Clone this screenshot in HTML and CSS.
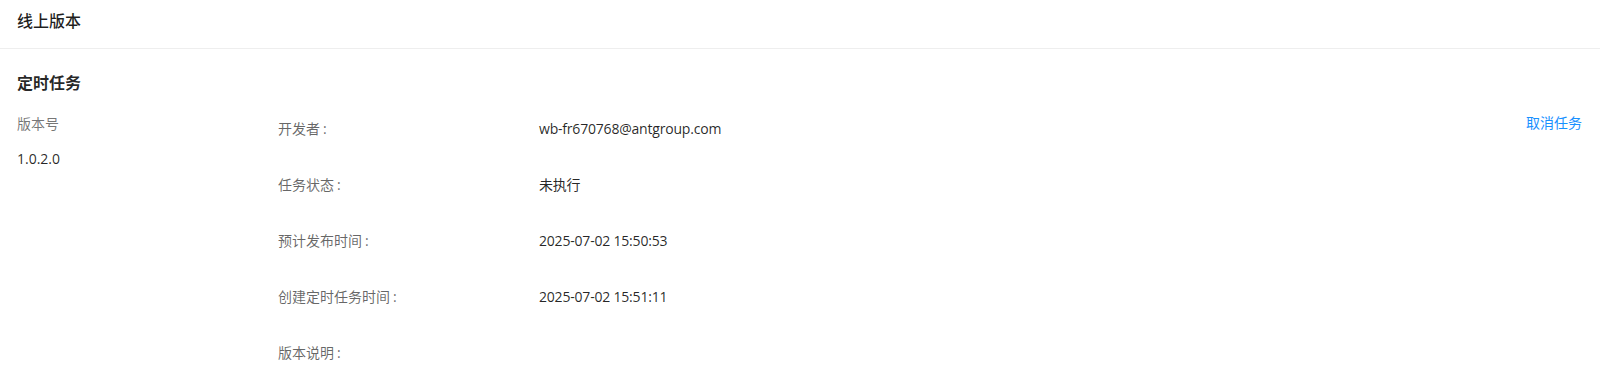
FILE: index.html
```html
<!DOCTYPE html>
<html lang="zh-CN">
<head>
<meta charset="utf-8">
<link rel="stylesheet" href="styles.css">
</head>
<body>
<div class="page">
  <div class="header"><span class="header-title">线上版本</span></div>
  <div class="section">
    <div class="section-title">定时任务</div>
    <div class="row">
      <div class="col-version">
        <div class="version-label">版本号</div>
        <div class="version-value">1.0.2.0</div>
      </div>
      <div class="desc">
        <div class="desc-label">开发者<span class="colon">:</span></div><div class="desc-value">wb-fr670768@antgroup.com</div>
        <div class="desc-label">任务状态<span class="colon">:</span></div><div class="desc-value">未执行</div>
        <div class="desc-label">预计发布时间<span class="colon">:</span></div><div class="desc-value">2025-07-02 15:50:53</div>
        <div class="desc-label">创建定时任务时间<span class="colon">:</span></div><div class="desc-value">2025-07-02 15:51:11</div>
        <div class="desc-label">版本说明<span class="colon">:</span></div><div class="desc-value"></div>
      </div>
      <div class="actions"><a class="action-link">取消任务</a></div>
    </div>
  </div>
</div>
</body>
</html>
```
FILE: styles.css
```css
* { box-sizing: border-box; }
html, body { margin: 0; padding: 0; background: #fff; }
body {
  font-family: "Open Sans", "Noto Sans CJK SC", sans-serif;
  font-size: 14px;
  color: rgba(0, 0, 0, 0.85);
  width: 1600px;
  height: 381px;
  overflow: hidden;
}
.header {
  height: 49px;
  border-bottom: 1px solid #eeeeee;
  padding: 0 17px;
  display: flex;
  align-items: center;
}
.header-title {
  font-size: 16px;
  font-weight: 500;
  line-height: 24px;
  color: rgba(0, 0, 0, 0.88);
  margin-top: -6px;
}
.section {
  padding: 22px 18px 0 17px;
}
.section-title {
  font-size: 16px;
  font-weight: 600;
  line-height: 24px;
  color: rgba(0, 0, 0, 0.85);
}
.row {
  display: flex;
  margin-top: 17px;
}
.col-version {
  width: 261px;
  flex: none;
  line-height: 22px;
}
.version-label { color: rgba(0, 0, 0, 0.55); margin-bottom: 13px; margin-top: 1px; }
.version-value { color: rgba(0, 0, 0, 0.85); }
.desc {
  flex: 1;
  display: grid;
  grid-template-columns: 261px 1fr;
  row-gap: 34px;
  line-height: 22px;
  margin-top: 6px;
}
.desc-label { color: rgba(0, 0, 0, 0.6); }
.colon { margin-left: 3px; }
.desc-value { color: rgba(0, 0, 0, 0.85); letter-spacing: -0.2px; }
.actions { flex: none; line-height: 22px; }
.action-link { color: #1890ff; cursor: pointer; }
```
